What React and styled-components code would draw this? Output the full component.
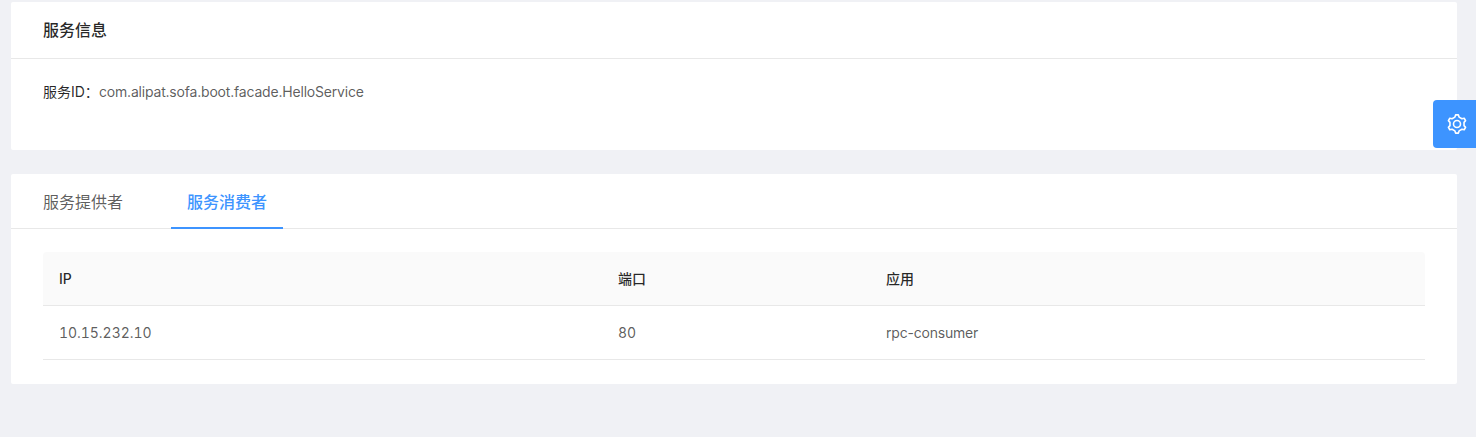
import React from "react";
import styled, { createGlobalStyle } from "styled-components";

const GlobalStyle = createGlobalStyle`
  * { box-sizing: border-box; }
  body {
    margin: 0;
    background: #f0f1f5;
    color: rgba(0, 0, 0, 0.65);
    font: 14px/22px Inter, "Noto Sans CJK SC", sans-serif;
  }
`;

const Page = styled.main`
  min-height: 437px;
  padding: 2px 19px 53px 11px;
  display: flex;
  flex-direction: column;
  gap: 24px;
  background: #f0f1f5;
`;

const Card = styled.section`
  background: #fff;
  border-radius: 2px;
  height: ${(p) => p.$height}px;
`;

const CardTitle = styled.h2`
  margin: 0;
  height: 57px;
  padding: 0 32px;
  line-height: 57px;
  border-bottom: 1px solid #e8e8e8;
  font-size: 16px;
  font-weight: 500;
  color: rgba(0, 0, 0, 0.85);
`;

const Description = styled.div`
  display: flex;
  padding: 22px 32px;
  white-space: nowrap;
`;

const Term = styled.span`
  width: 56px;
  color: rgba(0, 0, 0, 0.85);
`;

const Value = styled.span`
  letter-spacing: -0.195px;
`;

const Tabs = styled.nav`
  display: flex;
  gap: 32px;
  height: 55px;
  padding: 0 16px;
  border-bottom: 1px solid #e8e8e8;
`;

const Tab = styled.button`
  width: 112px;
  height: 55px;
  padding: 3px 0 0;
  border: 0;
  border-bottom: 2px solid ${(p) => (p.$active ? "#3d94ff" : "transparent")};
  background: none;
  color: ${(p) => (p.$active ? "#3d94ff" : "inherit")};
  font: ${(p) => (p.$active ? 500 : 400)} 16px/50px Inter, "Noto Sans CJK SC", sans-serif;
`;

const TableWrap = styled.div`
  padding: 23px 32px 24px;
`;

const Table = styled.table`
  width: 100%;
  table-layout: fixed;
  border-collapse: separate;
  border-spacing: 0;
  text-align: left;
`;

const HeadCell = styled.th`
  width: ${(p) => p.$width};
  height: 54px;
  padding: 0 16px;
  background: #fafafa;
  border-bottom: 1px solid #e8e8e8;
  color: rgba(0, 0, 0, 0.85);
  font-weight: 500;
  &:first-child { border-top-left-radius: 4px; }
  &:last-child { border-top-right-radius: 4px; }
`;

const Cell = styled.td`
  height: 54px;
  padding: 0 16px;
  border-bottom: 1px solid #e8e8e8;
  font-variant-numeric: ${(p) => (p.$numeric ? "tabular-nums" : "normal")};
  letter-spacing: ${(p) => (p.$numeric ? "-0.04px" : "-0.2px")};
`;

const SettingsHandle = styled.button`
  position: absolute;
  top: 100px;
  right: 0;
  width: 43px;
  height: 48px;
  padding: 0 0 0 5px;
  display: flex;
  align-items: center;
  justify-content: center;
  border: 0;
  border-radius: 4px 0 0 4px;
  background: #3d94ff;
  color: #fff;
`;

const GearSvg = styled.svg`
  width: 24px;
  height: 24px;
  fill: none;
  stroke: currentColor;
  stroke-width: 1.6;
  stroke-linejoin: round;
`;

// One tooth, repeated every 60 degrees to form the outline.
const TOOTH = [[-2.1, -6.9], [-1.4, -9.1], [1.4, -9.1], [2.1, -6.9]];
const gearPoints = [0, 1, 2, 3, 4, 5]
  .flatMap((i) => {
    const a = (i * Math.PI) / 3;
    return TOOTH.map(([x, y]) => [
      x * Math.cos(a) - y * Math.sin(a),
      x * Math.sin(a) + y * Math.cos(a),
    ]);
  })
  .map(([x, y]) => `${x.toFixed(2)},${y.toFixed(2)}`)
  .join(" ");

function GearIcon() {
  return (
    <GearSvg viewBox="-12 -12 24 24" aria-hidden="true">
      <polygon points={gearPoints} />
      <circle r="3.5" />
    </GearSvg>
  );
}

export default function App() {
  return (
    <>
      <GlobalStyle />
      <Page>
        <Card $height={148}>
          <CardTitle>服务信息</CardTitle>
          <Description>
            <Term>服务ID：</Term>
            <Value>com.alipat.sofa.boot.facade.HelloService</Value>
          </Description>
        </Card>
        <Card $height={210}>
          <Tabs>
            <Tab>服务提供者</Tab>
            <Tab $active>服务消费者</Tab>
          </Tabs>
          <TableWrap>
            <Table>
              <thead>
                <tr>
                  <HeadCell $width="559px">IP</HeadCell>
                  <HeadCell $width="268px">端口</HeadCell>
                  <HeadCell>应用</HeadCell>
                </tr>
              </thead>
              <tbody>
                <tr>
                  <Cell $numeric>10.15.232.10</Cell>
                  <Cell $numeric>80</Cell>
                  <Cell>rpc-consumer</Cell>
                </tr>
              </tbody>
            </Table>
          </TableWrap>
        </Card>
      </Page>
      <SettingsHandle aria-label="Settings">
        <GearIcon />
      </SettingsHandle>
    </>
  );
}
